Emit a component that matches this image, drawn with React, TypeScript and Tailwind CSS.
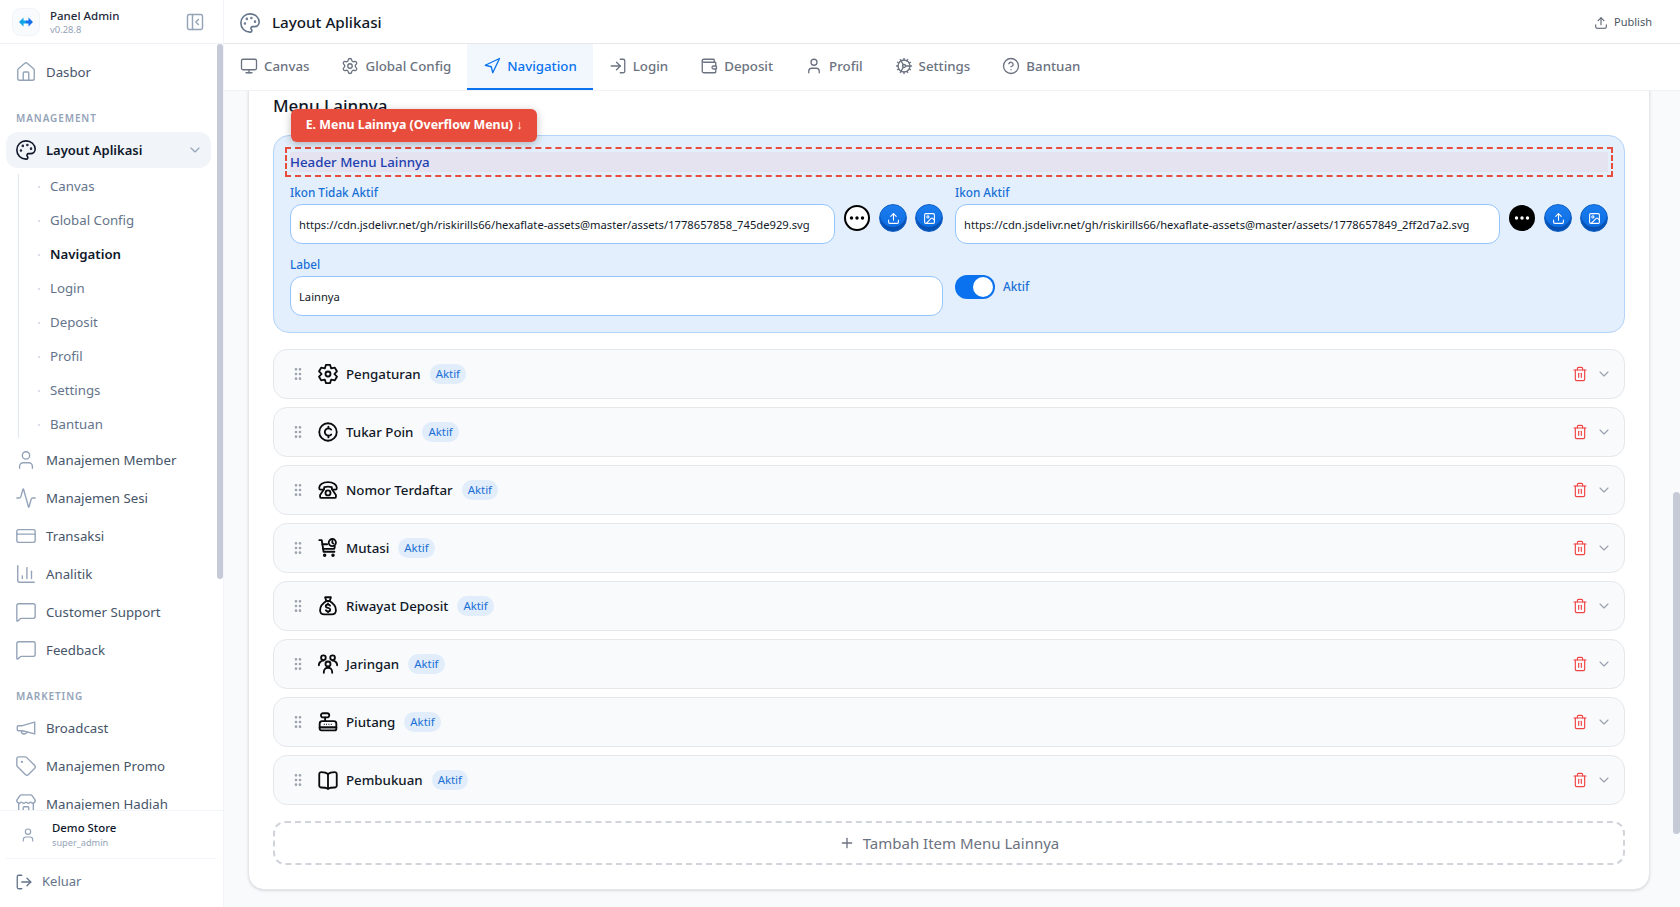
import {
  Activity,
  ChartColumn,
  ChevronDown,
  CircleHelp,
  Cog,
  CreditCard,
  GripVertical,
  House,
  Image,
  LogIn,
  LogOut,
  MessageSquare,
  Monitor,
  Navigation,
  PanelLeftClose,
  Palette,
  Plus,
  Settings,
  Store,
  Tag,
  Trash2,
  Upload,
  User,
  Wallet,
  type LucideIcon,
} from 'lucide-react';
import type { ElementType, ReactNode } from 'react';

const Horn = ({ className }: { className?: string }) => (
  <svg
    viewBox="0 0 24 24"
    fill="none"
    stroke="currentColor"
    strokeWidth={1.5}
    strokeLinecap="round"
    strokeLinejoin="round"
    className={className}
  >
    <path d="M21.500 5.500 8 9.500H3.500a1 1 0 0 0-1 1v3.500a1 1 0 0 0 1 1H8l13.500 3.500z" />
    <path d="M7 15.500c0 2 1.200 3 3 3s2.800-1 3-2" />
  </svg>
);

const subItems = ['Canvas', 'Global Config', 'Navigation', 'Login', 'Deposit', 'Profil', 'Settings', 'Bantuan'];

const managementItems: { label: string; icon: ElementType }[] = [
  { label: 'Manajemen Member', icon: User },
  { label: 'Manajemen Sesi', icon: Activity },
  { label: 'Transaksi', icon: CreditCard },
  { label: 'Analitik', icon: ChartColumn },
  { label: 'Customer Support', icon: MessageSquare },
  { label: 'Feedback', icon: MessageSquare },
];

const marketingItems: { label: string; icon: ElementType }[] = [
  { label: 'Broadcast', icon: Horn },
  { label: 'Manajemen Promo', icon: Tag },
  { label: 'Manajemen Hadiah', icon: Store },
];

const tabs: { label: string; icon: LucideIcon; active?: boolean }[] = [
  { label: 'Canvas', icon: Monitor },
  { label: 'Global Config', icon: Settings },
  { label: 'Navigation', icon: Navigation, active: true },
  { label: 'Login', icon: LogIn },
  { label: 'Deposit', icon: Wallet },
  { label: 'Profil', icon: User },
  { label: 'Settings', icon: Cog },
  { label: 'Bantuan', icon: CircleHelp },
];

// six-tooth gear outline, tooth pointing up
const gearPath = [0, 1, 2, 3, 4, 5]
  .map((k) => {
    const pt = (r: number, deg: number) => {
      const a = ((60 * k + deg - 90) * Math.PI) / 180;
      return `${(12 + r * Math.cos(a)).toFixed(2)} ${(12 + r * Math.sin(a)).toFixed(2)}`;
    };
    return `${k === 0 ? 'M' : 'L'}${pt(7.7, -30)} L${pt(11.2, -13)} L${pt(11.2, 13)}`;
  })
  .join(' ') + ' Z';

const RowIcon = ({ children }: { children: ReactNode }) => (
  <svg
    viewBox="0 0 24 24"
    fill="none"
    stroke="#0b0b0b"
    strokeWidth={2.2}
    strokeLinecap="round"
    strokeLinejoin="round"
    className="h-5 w-5 shrink-0"
  >
    {children}
  </svg>
);

const menuRows: { label: string; icon: ReactNode }[] = [
  {
    label: 'Pengaturan',
    icon: (
      <RowIcon>
        <path d={gearPath} />
        <circle cx="12" cy="12" r="3" />
      </RowIcon>
    ),
  },
  {
    label: 'Tukar Poin',
    icon: (
      <RowIcon>
        <circle cx="12" cy="12" r="10.5" />
        <path d="M15.8 9a4.4 4.4 0 1 0 0 6" />
        <path d="M12.5 5.5v2M12.5 16.500v2" />
      </RowIcon>
    ),
  },
  {
    label: 'Nomor Terdaftar',
    icon: (
      <RowIcon>
        <path d="M1.500 9c0-3.500 4.500-6.500 10.500-6.500S22.500 5.500 22.500 9v1a1.500 1.500 0 0 1-1.500 1.500h-3A1.500 1.500 0 0 1 16.500 10V8.500c-2.800-.8-6.200-.8-9 0V10A1.500 1.500 0 0 1 6 11.500H3A1.500 1.500 0 0 1 1.500 10z" />
        <path d="M7 11.500 2.500 18v2A1.500 1.500 0 0 0 4 21.500h16a1.500 1.500 0 0 0 1.500-1.500v-2L17 11.500" />
        <circle cx="12" cy="15.500" r="3" />
      </RowIcon>
    ),
  },
  {
    label: 'Mutasi',
    icon: (
      <RowIcon>
        <path d="M1.500 2.500h3l2.200 14h13" />
        <path d="M5.200 7.500H11M6.200 13h13.300l.7-2.500" />
        <circle cx="17.200" cy="5.500" r="4.300" />
        <path d="M17.200 3.500v2.200l1.300.8" />
        <circle cx="8" cy="20.800" r="1" />
        <circle cx="18" cy="20.800" r="1" />
      </RowIcon>
    ),
  },
  {
    label: 'Riwayat Deposit',
    icon: (
      <RowIcon>
        <path d="M8.500 1.500h7L14 6h-4z" />
        <path d="M10 6C6 8.500 2.500 13 2.500 17c0 3 2 5 5 5h9c3 0 5-2 5-5 0-4-3.500-8.500-7.500-11" />
        <path d="M14.500 11.500c-.5-.9-1.400-1.300-2.500-1.300-1.500 0-2.700.7-2.700 2s1.200 1.800 2.700 2.100 2.700.8 2.700 2.100-1.200 2-2.700 2c-1.100 0-2-.4-2.500-1.300M12 9v1.200M12 18.400v1.100" />
      </RowIcon>
    ),
  },
  {
    label: 'Jaringan',
    icon: (
      <RowIcon>
        <circle cx="6.500" cy="4.500" r="2.800" />
        <circle cx="17.500" cy="4.500" r="2.800" />
        <circle cx="12" cy="12" r="3" />
        <path d="M7 22.500v-1a5 5 0 0 1 10 0v1" />
        <path d="M1 13.500a5.500 5.500 0 0 1 5.500-5.500M23 13.500A5.500 5.500 0 0 0 17.500 8" />
      </RowIcon>
    ),
  },
  {
    label: 'Piutang',
    icon: (
      <RowIcon>
        <rect x="3.500" y="1.500" width="10" height="5" rx="2.500" />
        <path d="M8.500 6.500V11" />
        <path d="M5 11h14a3 3 0 0 1 3 3v4.500H2V14a3 3 0 0 1 3-3z" />
        <path d="M2 18.500h20V20a2 2 0 0 1-2 2H4a2 2 0 0 1-2-2z" />
        <path d="M7 14.800h10" strokeWidth={1.400} strokeDasharray="1 1.800" strokeLinecap="butt" />
      </RowIcon>
    ),
  },
  {
    label: 'Pembukuan',
    icon: (
      <RowIcon>
        <path d="M12 5C10 3 7 2.500 4 2.500a2.500 2.500 0 0 0-2.500 2.500v13.500A2.500 2.500 0 0 0 4 21c3 0 6 .3 8 1.500 2-1.200 5-1.500 8-1.500a2.500 2.500 0 0 0 2.500-2.500V5A2.500 2.500 0 0 0 20 2.500C17 2.500 14 3 12 5z" />
        <path d="M12 5v17.500" />
      </RowIcon>
    ),
  },
];

const SideItem = ({ label, icon: Icon }: { label: string; icon: ElementType }) => (
  <a className="mx-[6px] mb-[2px] flex h-9 items-center gap-[9px] rounded-xl pl-[9px] text-[13.25px] text-[#475569]">
    <Icon className="h-[22px] w-[22px] shrink-0 text-[#94a3b8]" strokeWidth={1.5} />
    <span className="whitespace-nowrap pt-px">{label}</span>
  </a>
);

const SideLabel = ({ children }: { children: string }) => (
  <div className="mb-[7px] mt-[21px] h-[14px] pl-4 text-[10px] font-semibold uppercase leading-[14px] tracking-[0.09em] text-[#94a3b8]">
    {children}
  </div>
);

const Sidebar = () => (
  <aside className="flex h-full w-[224px] shrink-0 flex-col border-r border-[#f1f5f9] bg-white">
    <div className="flex h-[44px] shrink-0 items-center border-b border-[#eef1f5] pl-3 pr-[18px]">
      <div className="flex h-7 w-7 items-center justify-center rounded-lg border border-[#f1f5f9] bg-[#f8fafc]">
        <svg viewBox="0 0 14 10" className="h-[10px] w-[14px]">
          <path d="M0 5 4.500 0.500V3.600H7V6.400H4.500V9.500z" fill="#0ea5e9" />
          <path d="M14 5 9.500 0.500V3.600H7V6.400H9.500V9.500z" fill="#1570ef" />
        </svg>
      </div>
      <div className="ml-[10px] flex-1 leading-none">
        <div className="text-[11.5px] font-medium leading-4 text-[#1e293b]">Panel Admin</div>
        <div className="text-[9.4px] leading-3 text-[#94a3b8]">v0.28.8</div>
      </div>
      <PanelLeftClose className="h-5 w-5 text-[#94a3b8]" strokeWidth={1.75} />
    </div>

    <nav className="relative min-h-0 flex-1 overflow-hidden pt-[10px]">
      <SideItem label="Dasbor" icon={House} />
      <SideLabel>Management</SideLabel>

      <a className="mx-[6px] mb-[2px] flex h-9 w-[205px] items-center gap-[9px] rounded-xl bg-[#f1f5f9] pl-[9px] pr-[8px] text-[13px] font-semibold text-[#0f172a]">
        <Palette className="h-[22px] w-[22px] shrink-0" strokeWidth={1.75} />
        <span className="flex-1 pt-px">Layout Aplikasi</span>
        <ChevronDown className="h-4 w-4 text-[#94a3b8]" strokeWidth={1.75} />
      </a>

      <div className="mb-1 ml-[18px] mt-[6px] flex flex-col gap-2 border-l border-[#e2e8f0]">
        {subItems.map((item) => (
          <div key={item} className="flex h-[26px] items-center pl-[19px]">
            <span className="h-[2px] w-[2px] rounded-full bg-[#cbd5e1]" />
            <span
              className={`ml-[10px] text-[13.25px] ${
                item === 'Navigation' ? 'font-semibold text-[#0f172a]' : 'text-[#64748b]'
              }`}
            >
              {item}
            </span>
          </div>
        ))}
      </div>

      {managementItems.map((item) => (
        <SideItem key={item.label} {...item} />
      ))}

      <SideLabel>Marketing</SideLabel>

      {marketingItems.map((item) => (
        <SideItem key={item.label} {...item} />
      ))}

      {/* scrollbar thumb */}
      <div className="absolute right-0 top-0 h-[535px] w-[6px] rounded-full bg-[#c5cad6]" />
    </nav>

    <div className="shrink-0 border-t border-[#f1f5f9]">
      <div className="flex h-[47px] items-center pl-5">
        <User className="h-4 w-4 text-[#94a3b8]" strokeWidth={1.75} />
        <div className="ml-4">
          <div className="text-[11.4px] font-medium leading-4 text-[#0f172a]">Demo Store</div>
          <div className="text-[9.2px] leading-[14px] text-[#94a3b8]">super_admin</div>
        </div>
      </div>
      <div className="mx-[6px] flex h-[49px] items-center gap-[9px] border-t border-[#f1f5f9] pb-[2px] pl-[9px] text-[13px] text-[#64748b]">
        <LogOut className="h-[18px] w-[18px] text-[#64748b]" strokeWidth={1.75} />
        Keluar
      </div>
    </div>
  </aside>
);

const BlueButton = ({ icon: Icon }: { icon: LucideIcon }) => (
  <button className="flex h-7 w-7 shrink-0 items-center justify-center rounded-full border border-[#0d5fc4] bg-gradient-to-b from-[#1b7df0] to-[#0a6ae0] text-white shadow-[inset_0_-4px_0_rgba(0,40,110,0.4)]">
    <Icon className="h-[13px] w-[13px]" strokeWidth={2} />
  </button>
);

const DotsIcon = ({ filled }: { filled?: boolean }) => (
  <span className="flex h-7 w-7 shrink-0 items-center justify-center">
    <svg viewBox="0 0 26 26" className="h-[26px] w-[26px]">
      <circle cx="13" cy="13" r={filled ? 13 : 12} fill={filled ? '#000' : '#fff'} stroke="#000" strokeWidth={filled ? 0 : 2} />
      {[7.5, 13, 18.5].map((cx) => (
        <circle key={cx} cx={cx} cy="13" r="1.700" fill={filled ? '#fff' : '#000'} />
      ))}
    </svg>
  </span>
);

const TextBox = ({ value }: { value: string }) => (
  <input
    readOnly
    value={value}
    className="h-10 w-full min-w-0 rounded-xl border border-[#93c5fd] bg-white px-2 text-[11.2px] text-[#111827] outline-none"
  />
);

const FieldLabel = ({ children }: { children: string }) => (
  <div className="mb-[3px] h-4 text-[11.75px] font-medium leading-[15px] text-[#1a6fd6]">{children}</div>
);

const IconField = ({ label, value, filled }: { label: string; value: string; filled?: boolean }) => (
  <div>
    <FieldLabel>{label}</FieldLabel>
    <div className="flex items-start gap-2">
      <TextBox value={value} />
      <DotsIcon filled={filled} />
      <BlueButton icon={Upload} />
      <BlueButton icon={Image} />
    </div>
  </div>
);

const OverflowPanel = () => (
  <div className="relative mb-4 rounded-2xl border border-[#b5d4f8] bg-[#e3effc] p-4">
    <div className="absolute -top-[27px] left-[17px] flex h-[33px] w-[246px] items-center justify-center rounded-md bg-[#e74c3c] text-[12.4px] font-bold text-white shadow-[0_2px_8px_rgba(0,0,0,0.25)]">
      E. Menu Lainnya (Overflow Menu) ↓
    </div>
    <div className="bg-[#e4e3ef] text-[13.3px] font-medium leading-5 text-[#1e40af] outline-2 outline-offset-[3px] outline-[#e74c3c] outline-dashed">
      Header Menu Lainnya
    </div>
    <div className="mt-[13px] grid grid-cols-2 gap-x-3 gap-y-[13px]">
      <IconField
        label="Ikon Tidak Aktif"
        value="https://cdn.jsdelivr.net/gh/riskirills66/hexaflate-assets@master/assets/1778657858_745de929.svg"
      />
      <IconField
        label="Ikon Aktif"
        value="https://cdn.jsdelivr.net/gh/riskirills66/hexaflate-assets@master/assets/1778657849_2ff2d7a2.svg"
        filled
      />
      <div>
        <FieldLabel>Label</FieldLabel>
        <TextBox value="Lainnya" />
      </div>
      <div className="flex items-center gap-2 pt-[1px]">
        <span className="flex h-6 w-10 items-center justify-end rounded-full bg-[#0a72ef] px-[2px]">
          <span className="h-5 w-5 rounded-full bg-white" />
        </span>
        <span className="text-[11.75px] font-medium text-[#1a6fd6]">Aktif</span>
      </div>
    </div>
  </div>
);

const MenuRow = ({ label, icon }: { label: string; icon: ReactNode }) => (
  <div className="flex h-[50px] items-center rounded-[14px] border border-[#e5e7eb] bg-[#f8fafc] pl-4 pr-3">
    <GripVertical className="h-4 w-4 text-[#9ca3af]" />
    <span className="ml-3">{icon}</span>
    <span className="ml-2 pt-px text-[13.3px] font-medium text-[#111827]">{label}</span>
    <span className="ml-[9px] flex h-5 items-center rounded-full bg-[#e1edfb] px-[6px] text-[11.4px] text-[#1a6fd6]">Aktif</span>
    <Trash2 className="ml-auto h-4 w-4 text-[#ef4444]" strokeWidth={1.75} />
    <ChevronDown className="ml-2 h-4 w-4 text-[#9ca3af]" strokeWidth={1.75} />
  </div>
);

export default function App() {
  return (
    <div className="flex h-[907px] w-full overflow-hidden bg-[#f8fafc] font-['Noto_Sans',sans-serif]">
      <Sidebar />

      <main className="flex min-w-0 flex-1 flex-col">
        <header className="flex h-[44px] shrink-0 items-center border-b border-[#e5e7eb] bg-white pl-[15px] pr-7 pt-[2px]">
          <Palette className="h-[22px] w-[22px] text-[#64748b]" strokeWidth={1.75} />
          <h1 className="ml-[11px] flex-1 text-[15.2px] font-medium text-[#111827]">Layout Aplikasi</h1>
          <button className="flex items-center gap-[6px] text-[11px] text-[#4b5563]">
            <Upload className="h-[14px] w-[14px]" strokeWidth={1.75} />
            Publish
          </button>
        </header>

        <div className="z-10 flex h-[47px] shrink-0 border-b border-[#f1f2f5] bg-white">
          {tabs.map(({ label, icon: Icon, active }) => (
            <button
              key={label}
              className={`flex items-center gap-[6px] border-b-2 px-4 text-[13.3px] font-medium ${
                active ? 'border-[#0a72ef] bg-[#f2f7fe] text-[#0a72ef]' : 'border-transparent text-[#6b7280]'
              }`}
            >
              <Icon className="h-[18px] w-[18px]" strokeWidth={1.75} />
              <span className="pt-px">{label}</span>
            </button>
          ))}
        </div>

        <div className="relative flex min-h-0 flex-1 flex-col justify-end overflow-hidden pb-[17px] pl-6 pr-[30px]">
          <section className="shrink-0 rounded-2xl border border-[#e5e7eb] bg-white p-6 shadow-sm">
            <h2 className="mb-[15px] h-7 text-[17px] font-medium leading-7 text-[#111827]">Menu Lainnya</h2>
            <OverflowPanel />
            <div className="flex flex-col gap-2">
              {menuRows.map((row) => (
                <MenuRow key={row.label} {...row} />
              ))}
            </div>
            <button className="mt-4 flex h-[44px] w-full items-center justify-center gap-2 rounded-xl border-2 border-dashed border-[#d1d5db] text-[15px] text-[#6b7280]">
              <Plus className="h-4 w-4" />
              Tambah Item Menu Lainnya
            </button>
          </section>

          {/* scrollbar thumb */}
          <div className="absolute right-0 top-[401px] h-[342px] w-[7px] rounded-full bg-[#c5cad6]" />
        </div>
      </main>
    </div>
  );
}
